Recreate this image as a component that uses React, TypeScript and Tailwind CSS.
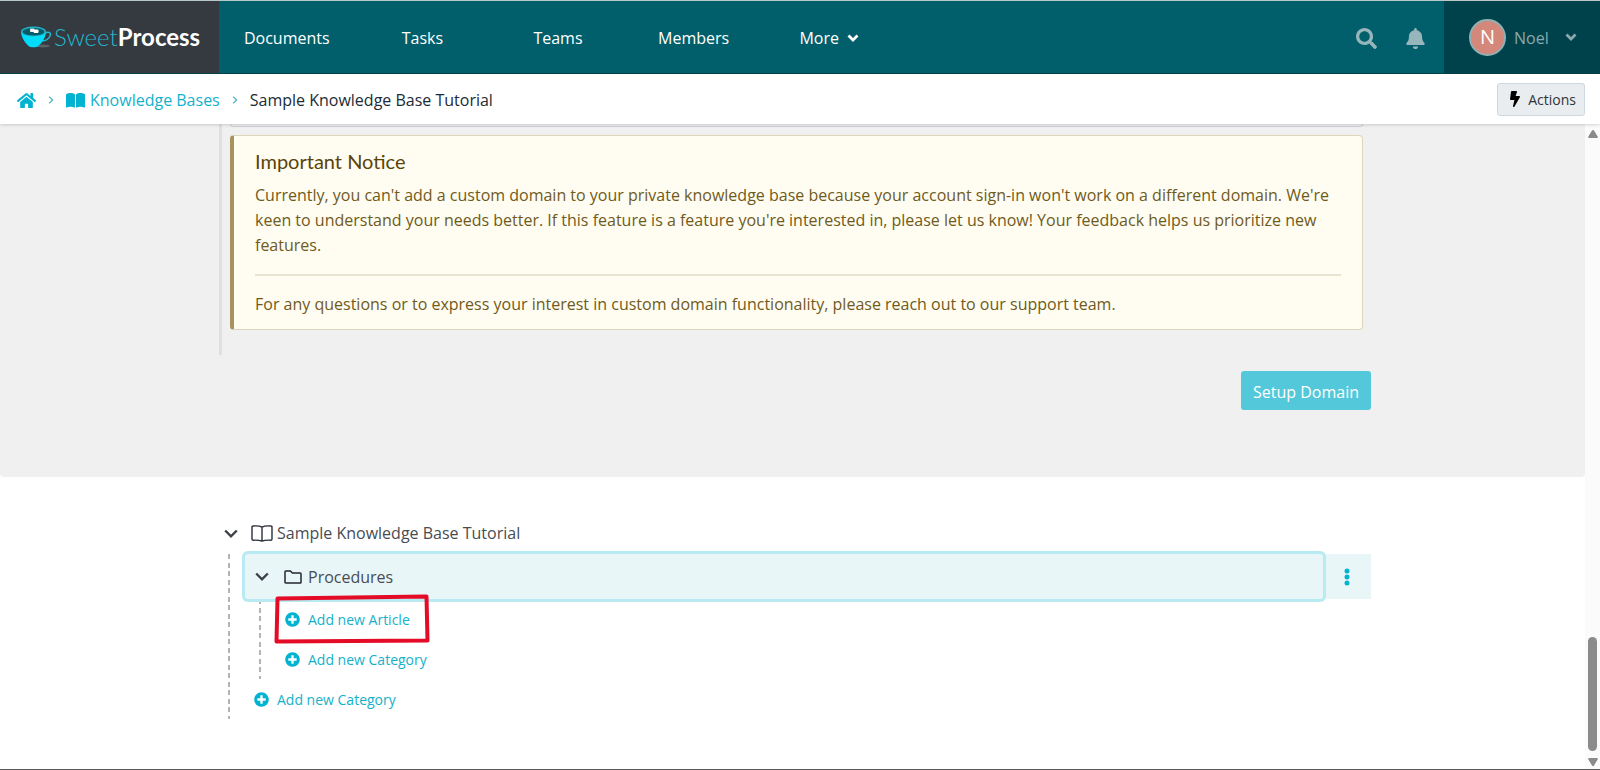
import React from 'react';
import { FaBell, FaBolt, FaHome, FaPlusCircle, FaSearch } from 'react-icons/fa';
import { FaBookOpen } from 'react-icons/fa6';

const NAV_ITEMS = ['Documents', 'Tasks', 'Teams', 'Members'];

const CupLogo = () => (
  <svg viewBox="0 0 32 24" className="h-6 w-8 shrink-0" aria-hidden="true">
    <ellipse cx="23" cy="21" rx="7" ry="1.5" fill="#5a6266" />
    <path d="M25 8c4-2 6.500 0 5 3-1.200 2.600-4.500 4.800-8 5" fill="none" stroke="#22b8cc" strokeWidth="1.5" />
    <path d="M1 7c.6 6.500 4.500 11 7.500 14 1.500 1.700 8.500 1.700 10 0 3-3 7-7.500 7.500-14z" fill="#00dcfa" />
    <ellipse cx="13.5" cy="6.5" rx="12.5" ry="5" fill="#1fb5c6" />
    <ellipse cx="13.5" cy="6.800" rx="11" ry="3.8" fill="#075a67" />
    <rect x="10" y="3.5" width="4.5" height="3.5" rx="1" fill="#e8f4f5" />
    <rect x="13.5" y="4.5" width="5" height="3.5" rx="1" fill="#ffffff" />
  </svg>
);

const Chevron = ({ className }: { className: string }) => (
  <svg viewBox="0 0 14 9" className={className} fill="none" stroke="currentColor" aria-hidden="true">
    <path d="M1.200 1.500 7 7.300l5.800-5.800" strokeWidth="2.4" />
  </svg>
);

const MenuChevron = () => (
  <svg viewBox="0 0 12 8" className="h-2 w-3" fill="none" stroke="currentColor" aria-hidden="true">
    <path d="M1.500 1.500 6 6l4.500-4.500" strokeWidth="2.8" />
  </svg>
);

const Separator = () => (
  <svg viewBox="0 0 6 8" className="h-2 w-[6px] shrink-0" fill="none" stroke="#5fb6c4" aria-hidden="true">
    <path d="m1.200.8 3.400 3.200-3.400 3.200" strokeWidth="1.4" />
  </svg>
);

const OpenBook = () => (
  <svg viewBox="0 0 22 17" className="h-[17px] w-[22px] shrink-0" fill="none" stroke="#2b2f38" aria-hidden="true">
    <path
      d="M11 2.200C9 .9 5.500.8 2.200 1c-.8 0-1.200.5-1.200 1.200v11.800c0 .8.500 1.200 1.200 1.200 3-.1 6.500 0 8.800.9 2.300-.9 5.800-1 8.800-.9.7 0 1.200-.4 1.200-1.200V2.200c0-.7-.4-1.200-1.200-1.200C16.500.8 13 .9 11 2.200zM11 2.200v13.900"
      strokeWidth="1.4"
    />
  </svg>
);

const Folder = () => (
  <svg viewBox="0 0 18 14" className="h-[14px] w-[18px] shrink-0" fill="none" stroke="#23262e" aria-hidden="true">
    <path
      d="M1.800 1h4.600l2 2h7.800c.5 0 .8.300.8.800v8.400c0 .5-.3.800-.8.800H1.800c-.5 0-.8-.3-.8-.8V1.800C1 1.300 1.300 1 1.800 1z"
      strokeWidth="1.5"
    />
  </svg>
);

const DashedRail = () => (
  <div className="w-[2px] shrink-0 bg-[repeating-linear-gradient(to_bottom,#b4b4b4_0px,#b4b4b4_5px,transparent_5px,transparent_9px,#b4b4b4_9px,#b4b4b4_14px,transparent_14px,transparent_17px)]" />
);

const AddLink = ({ label }: { label: string }) => (
  <a href="#add" className="flex h-10 items-center gap-2 text-[14px] text-[#14b1cb]">
    <FaPlusCircle className="size-[15px] text-[#00b3d0]" />
    {label}
  </a>
);

const Header = () => (
  <header className="flex h-[74px] border-t border-b border-t-[#b9c7c7] border-b-[#03434d] bg-[#005f6b]">
    <a href="#home" className="flex w-[219px] shrink-0 items-center bg-[#353940] pl-5 font-[Lato,sans-serif] text-[24px]">
      <CupLogo />
      <span className="ml-[2px] font-light text-[#22b8cc]">Sweet</span>
      <span className="font-bold text-white">Process</span>
    </a>
    <nav className="grid w-[678px] grid-cols-5 pt-[2px] text-white">
      {NAV_ITEMS.map((item) => (
        <a key={item} href={`#${item.toLowerCase()}`} className="flex items-center justify-center">
          {item}
        </a>
      ))}
      <button type="button" className="flex items-center justify-center gap-2">
        More
        <MenuChevron />
      </button>
    </nav>
    <div className="ml-auto flex items-center gap-7 pt-[2px] pr-[18px] text-[#96b6bb]">
      <button type="button" aria-label="Search">
        <FaSearch className="size-[21px]" />
      </button>
      <button type="button" aria-label="Notifications">
        <FaBell className="size-[21px]" />
      </button>
    </div>
    <button type="button" className="flex w-[156px] shrink-0 items-center bg-[#00424b] pl-[25px] text-[#8aa9ae]">
      <span className="flex size-[37px] items-center justify-center rounded-full border-2 border-[#8fb0b5] bg-[#d3887a] text-[20px] text-white">
        N
      </span>
      <span className="mr-4 ml-2 pt-[2px]">Noel</span>
      <MenuChevron />
    </button>
  </header>
);

const Breadcrumb = () => (
  <div className="relative flex h-[50px] items-center bg-white pr-[15px] pl-[17px] shadow-[0_1px_3px_rgba(0,0,0,0.16)]">
    <nav aria-label="Breadcrumb" className="flex items-center gap-3 pt-[2px]">
      <a href="#home" aria-label="Home" className="text-[#00b3d0]">
        <FaHome className="size-[19px]" />
      </a>
      <Separator />
      <a href="#knowledge-bases" className="flex items-center gap-[5px] text-[#00b3d0]">
        <FaBookOpen className="size-[19px]" />
        <span className="text-[#14b1cb]">Knowledge Bases</span>
      </a>
      <Separator />
      <span className="text-[#212b36]">Sample Knowledge Base Tutorial</span>
    </nav>
    <button
      type="button"
      className="ml-auto flex h-[33px] w-[88px] items-center justify-end gap-2 rounded-[3px] border border-[#cfd8de] bg-[#e9edf0] pr-2 text-[14px] text-[#2f343b]"
    >
      <FaBolt className="h-4 w-[10px] text-black" />
      Actions
    </button>
  </div>
);

const DomainSettings = () => (
  <section className="rounded-b-[4px] bg-[#f0f0f0] pb-[67px]">
    <div className="mx-auto max-w-[1157px] pl-[5px]">
      <div className="border-l-[3px] border-[#e0e0e0] pr-2 pb-[25px] pl-2">
        <div className="h-[3px] rounded-b-[4px] border-x border-b border-[#cdd3d8]" />
        <div className="mt-2 rounded-[4px] border border-l-4 border-[#ddd6b8] border-l-[#a8935c] bg-[#fffdf1] px-[21px] pt-[11px] pb-3 text-[#6f5a1c]">
          <h2 className="font-[Lato,sans-serif] text-[20px] leading-7 text-[#5a4408]">Important Notice</h2>
          <p className="mt-2 leading-[25px]">
            Currently, you can't add a custom domain to your private knowledge base because your account sign-in won't
            work on a different domain. We're keen to understand your needs better. If this feature is a feature you're
            interested in, please let us know! Your feedback helps us prioritize new features.
          </p>
          <hr className="my-4 border-t-2 border-[#e8e4d2]" />
          <p className="leading-[25px]">
            For any questions or to express your interest in custom domain functionality, please reach out to our
            support team.
          </p>
        </div>
      </div>
      <div className="mt-4 flex justify-end">
        <button type="button" className="h-[39px] rounded-[3px] bg-[#53c8da] px-3 pt-[2px] text-white">
          Setup Domain
        </button>
      </div>
    </div>
  </section>
);

const Contents = () => (
  <section className="mx-auto w-full max-w-[1157px] pt-9 pl-[5px] text-[#484c52]">
    <div className="mb-px flex h-10 items-center pl-[5px]">
      <button type="button" aria-label="Collapse Sample Knowledge Base Tutorial">
        <Chevron className="h-[9px] w-[14px] text-[#3c4148]" />
      </button>
      <div className="ml-[13px] flex items-center gap-1">
        <OpenBook />
        <span>Sample Knowledge Base Tutorial</span>
      </div>
    </div>
    <div className="flex pl-[9px]">
      <DashedRail />
      <div className="flex-1 pl-[15px]">
        <div className="flex h-[45px]">
          <div className="relative z-10 flex flex-1 items-center rounded-[3px] bg-[#e8f6f8] pl-[10px] ring-[3px] ring-[#b7eaf1]">
            <button type="button" aria-label="Collapse Procedures">
              <Chevron className="h-[9px] w-[14px] text-[#3c4148]" />
            </button>
            <div className="ml-[15px] flex items-center gap-[6px]">
              <Folder />
              <span>Procedures</span>
            </div>
          </div>
          <button type="button" aria-label="Procedures options" className="flex w-12 items-center justify-center bg-[#e8f6f8]">
            <svg viewBox="0 0 6 18" className="h-[18px] w-[6px]" fill="#00b3d0" aria-hidden="true">
              <circle cx="3" cy="3" r="2.5" />
              <circle cx="3" cy="9" r="2.5" />
              <circle cx="3" cy="15" r="2.5" />
            </svg>
          </button>
        </div>
        <div className="flex pl-[14px]">
          <DashedRail />
          <div className="pl-6">
            <div className="relative z-20">
              <AddLink label="Add new Article" />
              <svg viewBox="0 0 156 50" className="absolute -top-[5px] -left-[11px] h-[50px] w-[156px]" aria-hidden="true">
                <path
                  d="M3.500 4.500 152.500 2.500 153.500 46.500 2.500 47.500z"
                  fill="none"
                  stroke="#e40b26"
                  strokeWidth="4"
                  strokeLinejoin="round"
                />
              </svg>
            </div>
            <AddLink label="Add new Category" />
          </div>
        </div>
        <div className="pl-[9px]">
          <AddLink label="Add new Category" />
        </div>
      </div>
    </div>
  </section>
);

const ScrollTrack = () => (
  <div className="flex w-[15px] shrink-0 flex-col items-center bg-[#fbfbfb] pt-[6px] pb-[3px]" aria-hidden="true">
    <svg viewBox="0 0 10 8" className="h-2 w-[10px]" fill="#8b8b8b">
      <path d="M5 0q.6 0 1 .6L9.700 6.500Q10 8 9 8H1Q0 8 .3 6.500L4 .6Q4.400 0 5 0z" />
    </svg>
    <div className="mt-auto mb-[7px] h-[114px] w-[9px] rounded-full bg-[#8b8b8b]" />
    <svg viewBox="0 0 10 8" className="h-2 w-[10px]" fill="#8b8b8b">
      <path d="M5 8q.6 0 1-.6L9.700 1.500Q10 0 9 0H1Q0 0 .3 1.500L4 7.400Q4.400 8 5 8z" />
    </svg>
  </div>
);

export default function App() {
  return (
    <div className="flex min-h-screen flex-col border-b border-[#5a5a5a] bg-white font-['Open_Sans','Noto_Sans',sans-serif] text-[16px]">
      <Header />
      <Breadcrumb />
      <div className="flex flex-1">
        <main className="flex-1">
          <DomainSettings />
          <Contents />
        </main>
        <ScrollTrack />
      </div>
    </div>
  );
}
